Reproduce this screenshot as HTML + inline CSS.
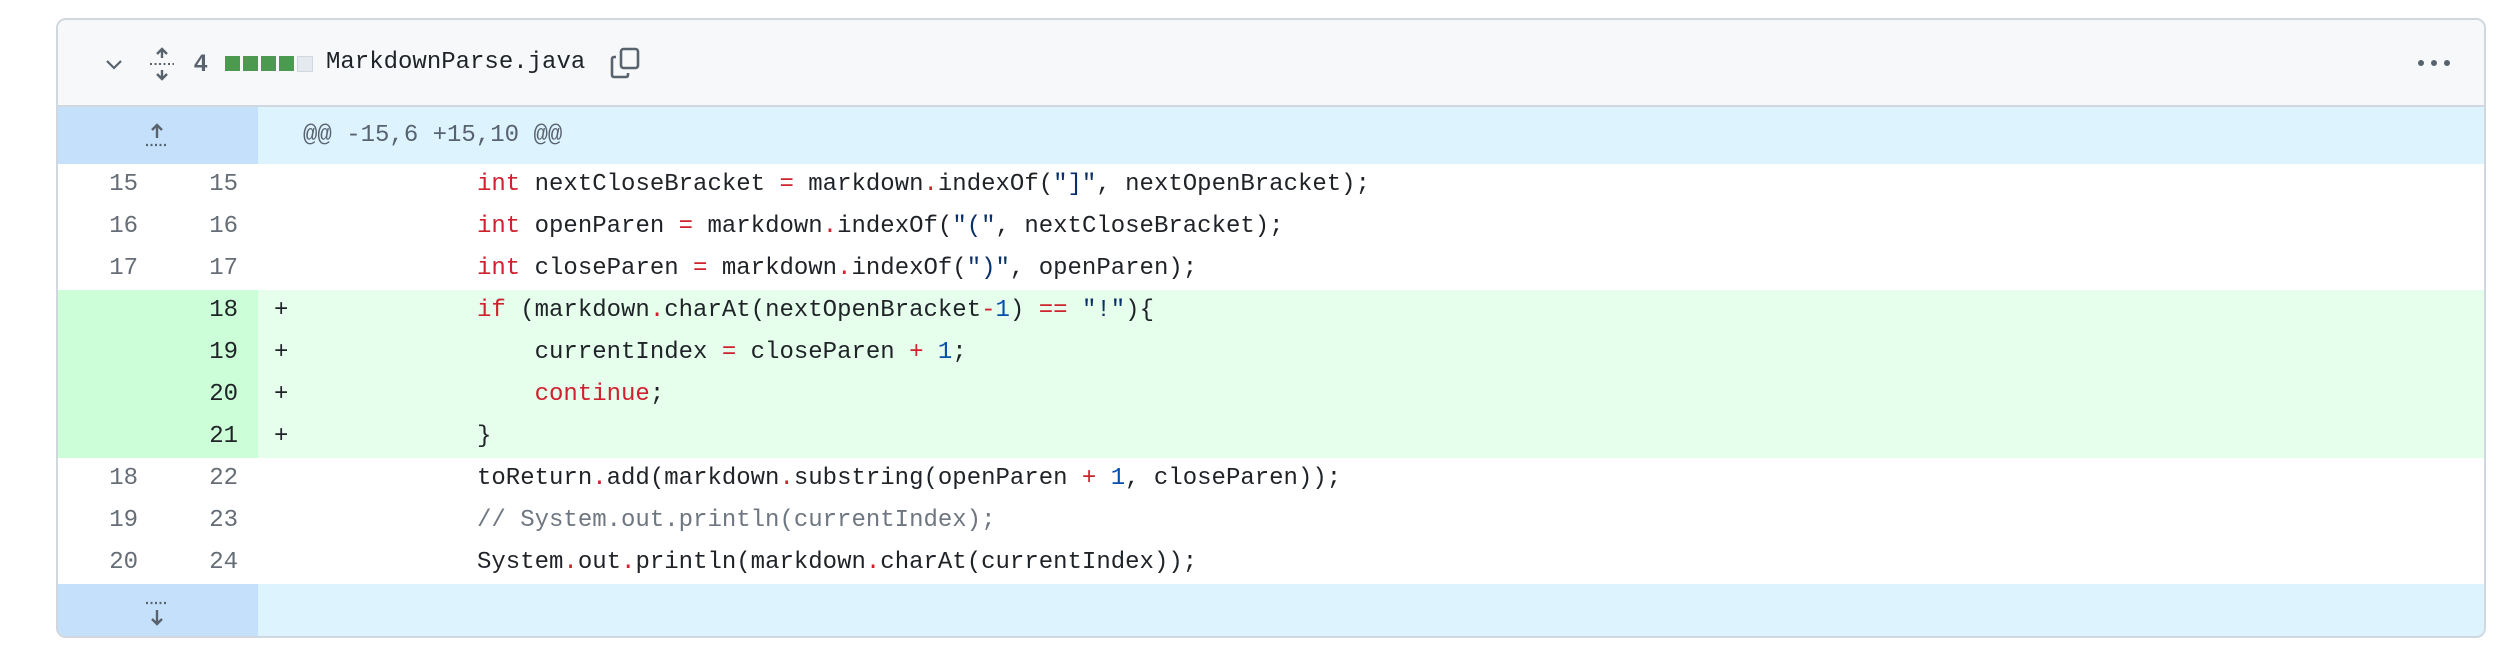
<!DOCTYPE html><html><head><meta charset="utf-8"><style>
body{margin:0;width:2520px;height:662px;background:#fff;position:relative;overflow:hidden;font-family:"Liberation Mono",monospace;}
.box{position:absolute;left:56px;top:18px;width:2430px;height:620px;border:2px solid #d0d7de;border-radius:10px;box-sizing:border-box;overflow:hidden;}
.hdr{position:absolute;left:0;top:0;right:0;height:87px;background:#f6f8fa;border-bottom:2px solid #d0d7de;box-sizing:border-box;}
.row{position:absolute;left:0;right:0;height:42px;font-size:24px;line-height:42px;color:#1f2328;white-space:pre;}
.o,.n{position:absolute;top:0;height:100%;width:100px;text-align:right;color:#656d76;box-sizing:border-box;padding-right:20px}
.o{left:0}.n{left:100px}
.c{position:absolute;left:419px;top:0}
.p{position:absolute;left:216px;top:0}
.add{background:#e6ffec}.add .o,.add .n{background:#ccffd8;color:#1f2328}
.k{color:#cf222e}.s{color:#0a3069}.m{color:#0550ae}.cm{color:#6e7781}
.hunk{background:#ddf4ff}.hunk .g{position:absolute;left:0;top:0;width:200px;height:100%;background:#c5e0fa}
</style></head><body>
<div class="box">
<div class="hdr">
<svg style="position:absolute;left:46px;top:38px" width="20" height="14" viewBox="0 0 20 14"><path d="M3 3l7 7 7-7" fill="none" stroke="#59636e" stroke-width="2.2"/></svg>
<svg style="position:absolute;left:90px;top:26px" width="28" height="36" viewBox="0 0 28 36"><path d="M14 3v9M9 8l5-5 5 5M14 33v-9M9 28l5 5 5-5" fill="none" stroke="#59636e" stroke-width="2.4"/><path d="M2 18h24" stroke="#59636e" stroke-width="2" stroke-dasharray="2 2.5"/></svg>
<div style="position:absolute;left:136px;top:30px;font:bold 24px 'Liberation Sans',sans-serif;color:#59636e">4</div>
<div style="position:absolute;left:167px;top:36px;width:15px;height:15px;background:#4c9a4f"></div>
<div style="position:absolute;left:185px;top:36px;width:15px;height:15px;background:#4c9a4f"></div>
<div style="position:absolute;left:203px;top:36px;width:15px;height:15px;background:#4c9a4f"></div>
<div style="position:absolute;left:221px;top:36px;width:15px;height:15px;background:#4c9a4f"></div>
<div style="position:absolute;left:239px;top:36px;width:14px;height:14px;background:#e6eaef;border:1px solid #d0d7de"></div>
<div style="position:absolute;left:268px;top:29px;font-size:24px;color:#1f2328">MarkdownParse.java</div>
<svg style="position:absolute;left:550px;top:26px" width="34" height="34" viewBox="0 0 34 34"><rect x="13" y="3" width="17" height="19" rx="2.5" fill="none" stroke="#59636e" stroke-width="2.6"/><path d="M8 11H6a2 2 0 0 0-2 2v16a2 2 0 0 0 2 2h12a2 2 0 0 0 2-2v-2" fill="none" stroke="#59636e" stroke-width="2.6"/></svg>
<svg style="position:absolute;left:2358px;top:38px" width="36" height="10"><circle cx="5" cy="5" r="3" fill="#59636e"/><circle cx="18" cy="5" r="3" fill="#59636e"/><circle cx="31" cy="5" r="3" fill="#59636e"/></svg>
</div>
<div class="row hunk" style="top:87px;height:57px;line-height:57px"><div class="g"></div>
<svg style="position:absolute;left:86px;top:14px" width="26" height="30"><path d="M13 17V4M8 9l5-5 5 5" fill="none" stroke="#59636e" stroke-width="2.4"/><path d="M2 24h22" stroke="#59636e" stroke-width="2.2" stroke-dasharray="2 2.5"/></svg>
<span style="position:absolute;left:245px;top:0;color:#59636e">@@ -15,6 +15,10 @@</span></div>
<div class="row" style="top:144px"><span class="o">15</span><span class="n">15</span><span class="c"><span class="k">int</span> nextCloseBracket <span class="k">=</span> markdown<span class="k">.</span>indexOf(<span class="s">"]"</span>, nextOpenBracket);</span></div>
<div class="row" style="top:186px"><span class="o">16</span><span class="n">16</span><span class="c"><span class="k">int</span> openParen <span class="k">=</span> markdown<span class="k">.</span>indexOf(<span class="s">"("</span>, nextCloseBracket);</span></div>
<div class="row" style="top:228px"><span class="o">17</span><span class="n">17</span><span class="c"><span class="k">int</span> closeParen <span class="k">=</span> markdown<span class="k">.</span>indexOf(<span class="s">")"</span>, openParen);</span></div>
<div class="row add" style="top:270px"><span class="o"></span><span class="n">18</span><span class="p">+</span><span class="c"><span class="k">if</span> (markdown<span class="k">.</span>charAt(nextOpenBracket<span class="k">-</span><span class="m">1</span>) <span class="k">==</span> <span class="s">"!"</span>){</span></div>
<div class="row add" style="top:312px"><span class="o"></span><span class="n">19</span><span class="p">+</span><span class="c">    currentIndex <span class="k">=</span> closeParen <span class="k">+</span> <span class="m">1</span>;</span></div>
<div class="row add" style="top:354px"><span class="o"></span><span class="n">20</span><span class="p">+</span><span class="c">    <span class="k">continue</span>;</span></div>
<div class="row add" style="top:396px"><span class="o"></span><span class="n">21</span><span class="p">+</span><span class="c">}</span></div>
<div class="row" style="top:438px"><span class="o">18</span><span class="n">22</span><span class="c">toReturn<span class="k">.</span>add(markdown<span class="k">.</span>substring(openParen <span class="k">+</span> <span class="m">1</span>, closeParen));</span></div>
<div class="row" style="top:480px"><span class="o">19</span><span class="n">23</span><span class="c cm">// System.out.println(currentIndex);</span></div>
<div class="row" style="top:522px"><span class="o">20</span><span class="n">24</span><span class="c">System<span class="k">.</span>out<span class="k">.</span>println(markdown<span class="k">.</span>charAt(currentIndex));</span></div>
<div class="row hunk" style="top:564px;height:56px"><div class="g"></div>
<svg style="position:absolute;left:86px;top:14px" width="26" height="30"><path d="M2 5h22" stroke="#59636e" stroke-width="2.2" stroke-dasharray="2 2.5"/><path d="M13 12v14M8 21l5 5 5-5" fill="none" stroke="#59636e" stroke-width="2.4"/></svg></div>
</div>
</body></html>
